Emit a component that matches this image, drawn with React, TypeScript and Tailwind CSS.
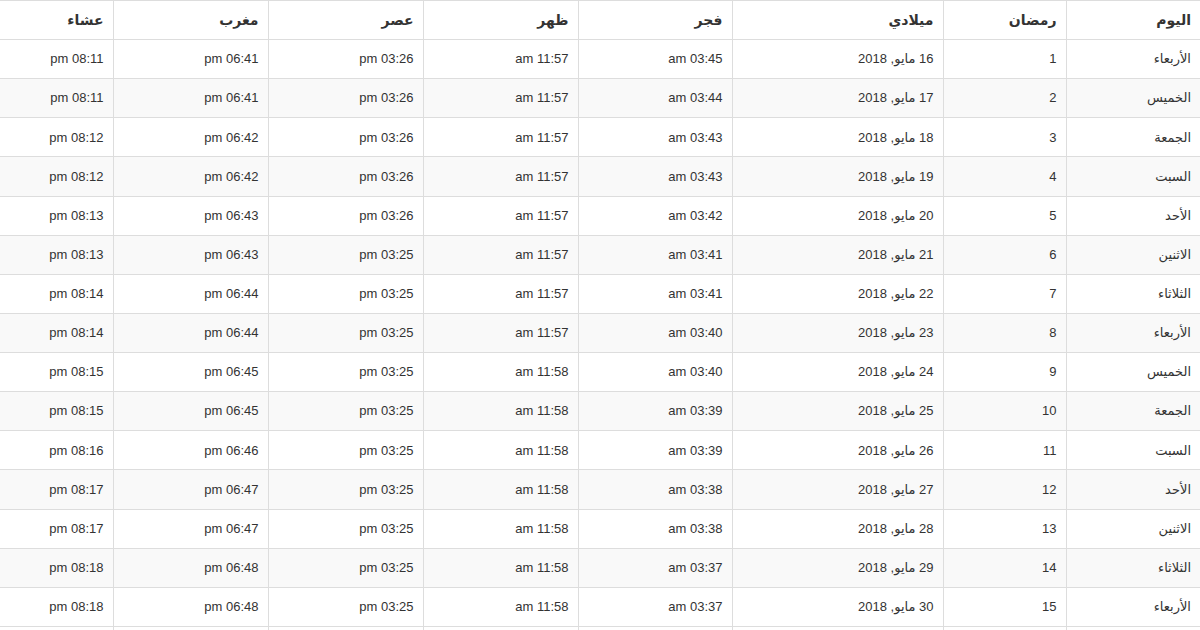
const DAYS = ["الأربعاء", "الخميس", "الجمعة", "السبت", "الأحد", "الاثنين", "الثلاثاء"];

const FAJR = ["03:45", "03:44", "03:43", "03:43", "03:42", "03:41", "03:41", "03:40", "03:40", "03:39", "03:39", "03:38", "03:38", "03:37", "03:37"];
const ASR = ["03:26", "03:26", "03:26", "03:26", "03:26", "03:25", "03:25", "03:25", "03:25", "03:25", "03:25", "03:25", "03:25", "03:25", "03:25"];
const MAGHRIB = ["06:41", "06:41", "06:42", "06:42", "06:43", "06:43", "06:44", "06:44", "06:45", "06:45", "06:46", "06:47", "06:47", "06:48", "06:48"];
const ISHA = ["08:11", "08:11", "08:12", "08:12", "08:13", "08:13", "08:14", "08:14", "08:15", "08:15", "08:16", "08:17", "08:17", "08:18", "08:18"];

const ROWS = FAJR.map((fajr, i) => ({
  day: DAYS[i % 7],
  ramadan: String(i + 1),
  date: `${16 + i} مايو, 2018`,
  fajr: `${fajr} am`,
  dhuhr: i < 8 ? "11:57 am" : "11:58 am",
  asr: `${ASR[i]} pm`,
  maghrib: `${MAGHRIB[i]} pm`,
  isha: `${ISHA[i]} pm`,
}));

const HEADERS = ["اليوم", "رمضان", "ميلادي", "فجر", "ظهر", "عصر", "مغرب", "عشاء"];
const WIDTHS = ["w-[134px]", "w-[123px]", "w-[211px]", "w-[154px]", "w-[155px]", "w-[155px]", "w-[155px]", "w-[113px]"];

const cell = "border border-[#ddd] px-[9px] text-right align-middle first:border-r-0 last:border-l-0";

export default function App() {
  return (
    <div className="h-[630px] w-[1200px] overflow-hidden bg-white font-['Liberation_Sans','DejaVu_Sans',sans-serif] text-[13px] text-[#333]">
      <table dir="rtl" className="w-[1200px] table-fixed border-collapse">
        <colgroup>
          {WIDTHS.map((w, i) => (
            <col key={i} className={w} />
          ))}
        </colgroup>
        <thead>
          <tr className="h-[39px]">
            {HEADERS.map((h) => (
              <th key={h} className={`${cell} text-[14px] font-bold`}>
                {h}
              </th>
            ))}
          </tr>
        </thead>
        <tbody>
          {ROWS.map((r, i) => (
            <tr key={r.ramadan} className={`h-[39.14px] ${i % 2 === 1 ? "bg-[#f9f9f9]" : "bg-white"}`}>
              <td className={cell}>{r.day}</td>
              <td className={cell}>{r.ramadan}</td>
              <td className={cell}>{r.date}</td>
              <td className={cell}>{r.fajr}</td>
              <td className={cell}>{r.dhuhr}</td>
              <td className={cell}>{r.asr}</td>
              <td className={cell}>{r.maghrib}</td>
              <td className={cell}>{r.isha}</td>
            </tr>
          ))}
          <tr className="h-[39px]">
            {HEADERS.map((h) => (
              <td key={h} className={cell}>
                &nbsp;
              </td>
            ))}
          </tr>
        </tbody>
      </table>
    </div>
  );
}
